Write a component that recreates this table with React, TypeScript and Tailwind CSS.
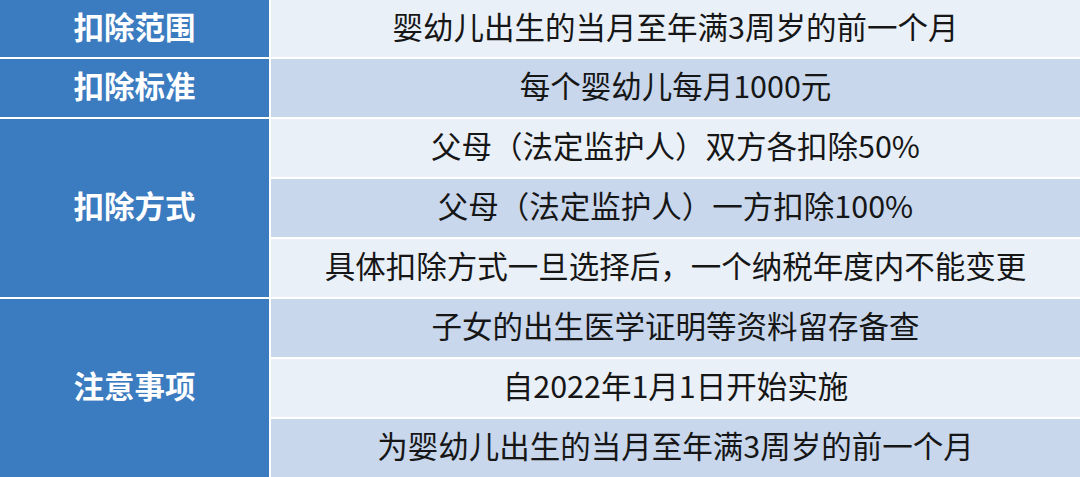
const groups = [
  { label: '扣除范围', items: ['婴幼儿出生的当月至年满3周岁的前一个月'] },
  { label: '扣除标准', items: ['每个婴幼儿每月1000元'] },
  {
    label: '扣除方式',
    items: [
      '父母（法定监护人）双方各扣除50%',
      '父母（法定监护人）一方扣除100%',
      '具体扣除方式一旦选择后，一个纳税年度内不能变更',
    ],
  },
  {
    label: '注意事项',
    items: [
      '子女的出生医学证明等资料留存备查',
      '自2022年1月1日开始实施',
      '为婴幼儿出生的当月至年满3周岁的前一个月',
    ],
  },
]

const rowSpan: Record<number, string> = {
  1: 'row-span-1',
  3: 'row-span-3',
}

export default function App() {
  let idx = 0
  return (
    <div
      className="grid h-[477px] w-[1080px] grid-cols-[269px_1fr] grid-rows-[57px_repeat(7,58px)] gap-[2px] bg-white"
      style={{ fontFamily: '"Noto Sans CJK SC", "Noto Sans", sans-serif' }}
    >
      {groups.map((g) => (
        <div key={g.label} className="contents">
          <div
            className={`${rowSpan[g.items.length]} flex items-center justify-center bg-[#3b7bc0] pb-1 text-[30.5px] font-bold text-white`}
          >
            {g.label}
          </div>
          {g.items.map((t) => {
            const dark = idx++ % 2 === 1
            return (
              <div
                key={t}
                className={`col-start-2 flex items-center justify-center pb-1 text-[30.5px] text-[#161616] ${
                  dark ? 'bg-[#c8d7ec]' : 'bg-[#eaf0f8]'
                }`}
              >
                {t}
              </div>
            )
          })}
        </div>
      ))}
    </div>
  )
}
